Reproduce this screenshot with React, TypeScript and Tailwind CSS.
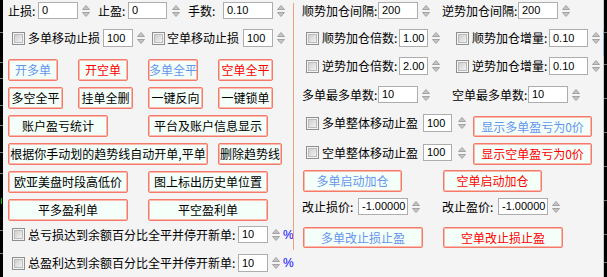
import React from "react";

// small spin arrows next to each number box
const Spinner = ({ className = "" }: { className?: string }) => (
  <svg width="8" height="14" viewBox="0 0 8 14" className={`shrink-0 ${className}`}>
    <polygon points="0.5,5.5 4,1.5 7.5,5.5" fill="#c4c4c4" stroke="#a3a3a3" strokeWidth="1" />
    <polygon points="0.5,8.5 4,12.5 7.5,8.5" fill="#c4c4c4" stroke="#a3a3a3" strokeWidth="1" />
  </svg>
);

const Num = ({ value, className = "" }: { value: string; className?: string }) => (
  <div
    className={`shrink-0 flex items-center bg-white border border-[#adadad] pl-[3px] text-[11px] leading-none text-black font-['Liberation_Sans',Arial,sans-serif] ${className}`}
  >
    {value}
  </div>
);

const Check = ({ className = "" }: { className?: string }) => (
  <div className={`shrink-0 w-[13px] h-[13px] border border-[#8e8f8f] bg-[#f4f4f4] p-[1px] ${className}`}>
    <div className="w-full h-full border border-[#bcbcbc] bg-gradient-to-br from-[#cfcfcf] to-[#f2f2f2]" />
  </div>
);

const Btn = ({ children, className = "" }: { children: React.ReactNode; className?: string }) => (
  <div
    className={`shrink-0 flex items-center justify-center whitespace-nowrap border border-[#f47a6a] shadow-[inset_0_0_0_1px_#fbb8ac] rounded-[2px] bg-[#f5fffa] text-[12px] leading-none ${className}`}
  >
    {children}
  </div>
);

const Label = ({ children, className = "" }: { children: React.ReactNode; className?: string }) => (
  <span className={`shrink-0 whitespace-nowrap text-[12px] leading-none text-black ${className}`}>{children}</span>
);

const blue = "text-[#6495ed]";
const red = "text-[#ff0000]";

const LeftStrip = () => (
  <svg width="3" height="277" className="shrink-0 block">
    <rect width="3" height="277" fill="#000" />
    {[32, 62, 78, 105, 125, 152, 173, 230, 253].map((y) => (
      <rect key={y} x="0" y={y} width="3" height="1" fill="#7a7a7a" />
    ))}
    <rect x="1" y="198" width="1" height="6" fill="#00c000" />
  </svg>
);

const RightStrip = () => (
  <svg width="4" height="277" className="shrink-0 block">
    <rect width="4" height="277" fill="#000" />
    <rect x="0" y="0" width="1" height="277" fill="#c9ccd2" />
    <rect x="0" y="30" width="1" height="26" fill="#9ab8e0" />
    {[32, 64, 98, 132, 166, 200, 234, 262].map((y) => (
      <rect key={y} x="1" y={y} width="3" height="1" fill="#707070" />
    ))}
  </svg>
);

export default function App() {
  return (
    <div className="w-[607px] h-[277px] flex bg-[#f4f4f4] overflow-hidden font-['Noto_Sans_CJK_SC','Noto_Sans',sans-serif]">
      <LeftStrip />

      {/* left panel */}
      <div className="w-[290px] shrink-0 flex flex-col pl-[5px] pt-[2px]">
        <div className="flex items-center h-[17px]">
          <Label className="w-[30px]">止损:</Label>
          <Num value="0" className="w-[40px] h-[17px]" />
          <Spinner className="ml-[4px]" />
          <Label className="ml-[8px] w-[30px]">止盈:</Label>
          <Num value="0" className="w-[39px] h-[17px]" />
          <Spinner className="ml-[5px]" />
          <Label className="ml-[8px] w-[35px]">手数:</Label>
          <Num value="0.10" className="w-[50px] h-[17px]" />
          <Spinner className="ml-[4px]" />
        </div>

        <div className="flex items-center h-[18px] mt-[10px]">
          <Check className="ml-[4px]" />
          <Label className="ml-[3px] w-[72px]">多单移动止损</Label>
          <Num value="100" className="ml-[3px] w-[30px] h-[18px]" />
          <Spinner className="ml-[4px]" />
          <Check className="ml-[7px]" />
          <Label className="ml-[2px] w-[72px]">空单移动止损</Label>
          <Num value="100" className="ml-[4px] w-[30px] h-[18px]" />
          <Spinner className="ml-[4px]" />
        </div>

        <div className="flex h-[22px] mt-[12px]">
          <Btn className={`w-[50px] h-[22px] ${blue}`}>开多单</Btn>
          <Btn className={`ml-[20px] w-[50px] h-[22px] ${red}`}>开空单</Btn>
          <Btn className={`ml-[20px] w-[50px] h-[22px] ${blue}`}>多单全平</Btn>
          <Btn className={`ml-[20px] w-[55px] h-[22px] ${red}`}>空单全平</Btn>
        </div>

        <div className="flex h-[22px] mt-[6px]">
          <Btn className="w-[55px] h-[22px] text-black">多空全平</Btn>
          <Btn className="ml-[15px] w-[55px] h-[22px] text-black">挂单全删</Btn>
          <Btn className="ml-[15px] w-[55px] h-[22px] text-black">一键反向</Btn>
          <Btn className="ml-[15px] w-[55px] h-[22px] text-black">一键锁单</Btn>
        </div>

        <div className="flex h-[22px] mt-[6px]">
          <Btn className="w-[100px] h-[22px] text-black">账户盈亏统计</Btn>
          <Btn className="ml-[40px] w-[120px] h-[22px] text-black">平台及账户信息显示</Btn>
        </div>

        <div className="flex h-[22px] mt-[6px]">
          <Btn className="w-[200px] h-[22px] text-black">根据你手动划的趋势线自动开单,平单</Btn>
          <Btn className="ml-[10px] w-[64px] h-[22px] text-black">删除趋势线</Btn>
        </div>

        <div className="flex h-[22px] mt-[6px]">
          <Btn className="w-[120px] h-[22px] text-black">欧亚美盘时段高低价</Btn>
          <Btn className="ml-[20px] w-[120px] h-[22px] text-black">图上标出历史单位置</Btn>
        </div>

        <div className="flex h-[22px] mt-[6px]">
          <Btn className="w-[120px] h-[22px] text-black">平多盈利单</Btn>
          <Btn className="ml-[20px] w-[120px] h-[22px] text-black">平空盈利单</Btn>
        </div>

        <div className="flex items-center h-[17px] mt-[5px]">
          <Check className="ml-[4px]" />
          <Label className="ml-[3px] w-[210px]">总亏损达到余额百分比全平并停开新单:</Label>
          <Num value="10" className="w-[30px] h-[17px]" />
          <Spinner className="ml-[4px]" />
          <span className="ml-[3px] text-[12px] leading-none text-[#0000ff] font-['Liberation_Sans',Arial,sans-serif]">%</span>
        </div>

        <div className="flex items-center h-[18px] mt-[11px]">
          <Check className="ml-[4px]" />
          <Label className="ml-[3px] w-[210px]">总盈利达到余额百分比全平并停开新单:</Label>
          <Num value="10" className="w-[30px] h-[18px]" />
          <Spinner className="ml-[4px]" />
          <span className="ml-[3px] text-[12px] leading-none text-[#0000ff] font-['Liberation_Sans',Arial,sans-serif]">%</span>
        </div>
      </div>

      {/* divider */}
      <div className="w-[1px] h-[247px] mt-[3px] shrink-0 bg-[#f2a17c]" />

      {/* right panel */}
      <div className="flex-1 flex flex-col pl-[8px] pt-[2px]">
        <div className="flex items-center h-[17px]">
          <Label className="w-[76px]">顺势加仓间隔:</Label>
          <Num value="200" className="w-[40px] h-[17px]" />
          <Spinner className="ml-[4px]" />
          <Label className="ml-[12px] w-[76px]">逆势加仓间隔:</Label>
          <Num value="200" className="w-[40px] h-[17px]" />
          <Spinner className="ml-[4px]" />
        </div>

        <div className="flex items-center h-[18px] mt-[10px]">
          <Check className="ml-[4px]" />
          <Label className="ml-[3px] w-[77px]">顺势加仓倍数:</Label>
          <Num value="1.00" className="w-[29px] h-[18px]" />
          <Spinner className="ml-[4px]" />
          <Check className="ml-[16px]" />
          <Label className="ml-[3px] w-[77px]">顺势加仓增量:</Label>
          <Num value="0.10" className="w-[39px] h-[18px]" />
          <Spinner className="ml-[4px]" />
        </div>

        <div className="flex items-center h-[18px] mt-[10px]">
          <Check className="ml-[4px]" />
          <Label className="ml-[3px] w-[77px]">逆势加仓倍数:</Label>
          <Num value="2.00" className="w-[29px] h-[18px]" />
          <Spinner className="ml-[4px]" />
          <Check className="ml-[16px]" />
          <Label className="ml-[3px] w-[77px]">逆势加仓增量:</Label>
          <Num value="0.10" className="w-[39px] h-[18px]" />
          <Spinner className="ml-[4px]" />
        </div>

        <div className="flex items-center h-[17px] mt-[11px]">
          <Label className="w-[76px]">多单最多单数:</Label>
          <Num value="10" className="w-[40px] h-[17px]" />
          <Spinner className="ml-[4px]" />
          <Label className="ml-[22px] w-[76px]">空单最多单数:</Label>
          <Num value="10" className="w-[40px] h-[17px]" />
          <Spinner className="ml-[4px]" />
        </div>

        <div className="flex items-start h-[23px] mt-[11px]">
          <Check className="ml-[4px] mt-[3px]" />
          <Label className="ml-[3px] w-[96px] mt-[3px]">多单整体移动止盈</Label>
          <Num value="100" className="ml-[5px] w-[29px] h-[18px]" />
          <Spinner className="ml-[6px] mt-[2px]" />
          <Btn className={`ml-[7px] mt-[2px] w-[119px] h-[21px] ${blue}`}>显示多单盈亏为0价</Btn>
        </div>

        <div className="flex items-start h-[22px] mt-[6px]">
          <Check className="ml-[4px] mt-[3px]" />
          <Label className="ml-[3px] w-[96px] mt-[4px]">空单整体移动止盈</Label>
          <Num value="100" className="ml-[5px] mt-[1px] w-[29px] h-[17px]" />
          <Spinner className="ml-[6px] mt-[3px]" />
          <Btn className={`ml-[7px] w-[119px] h-[22px] ${red}`}>显示空单盈亏为0价</Btn>
        </div>

        <div className="flex h-[22px] mt-[5px]">
          <Btn className={`ml-[1px] w-[99px] h-[22px] ${blue}`}>多单启动加仓</Btn>
          <Btn className={`ml-[41px] w-[99px] h-[22px] ${red}`}>空单启动加仓</Btn>
        </div>

        <div className="flex items-center h-[17px] mt-[6px]">
          <Label className="w-[56px]">改止损价:</Label>
          <Num value="-1.00000" className="w-[50px] h-[17px]" />
          <Spinner className="ml-[4px]" />
          <Label className="ml-[22px] w-[56px]">改止盈价:</Label>
          <Num value="-1.00000" className="w-[50px] h-[17px]" />
          <Spinner className="ml-[4px]" />
        </div>

        <div className="flex h-[21px] mt-[12px]">
          <Btn className={`ml-[1px] w-[120px] h-[21px] ${blue}`}>多单改止损止盈</Btn>
          <Btn className={`ml-[20px] w-[120px] h-[21px] ${red}`}>空单改止损止盈</Btn>
        </div>
      </div>

      <RightStrip />
    </div>
  );
}
